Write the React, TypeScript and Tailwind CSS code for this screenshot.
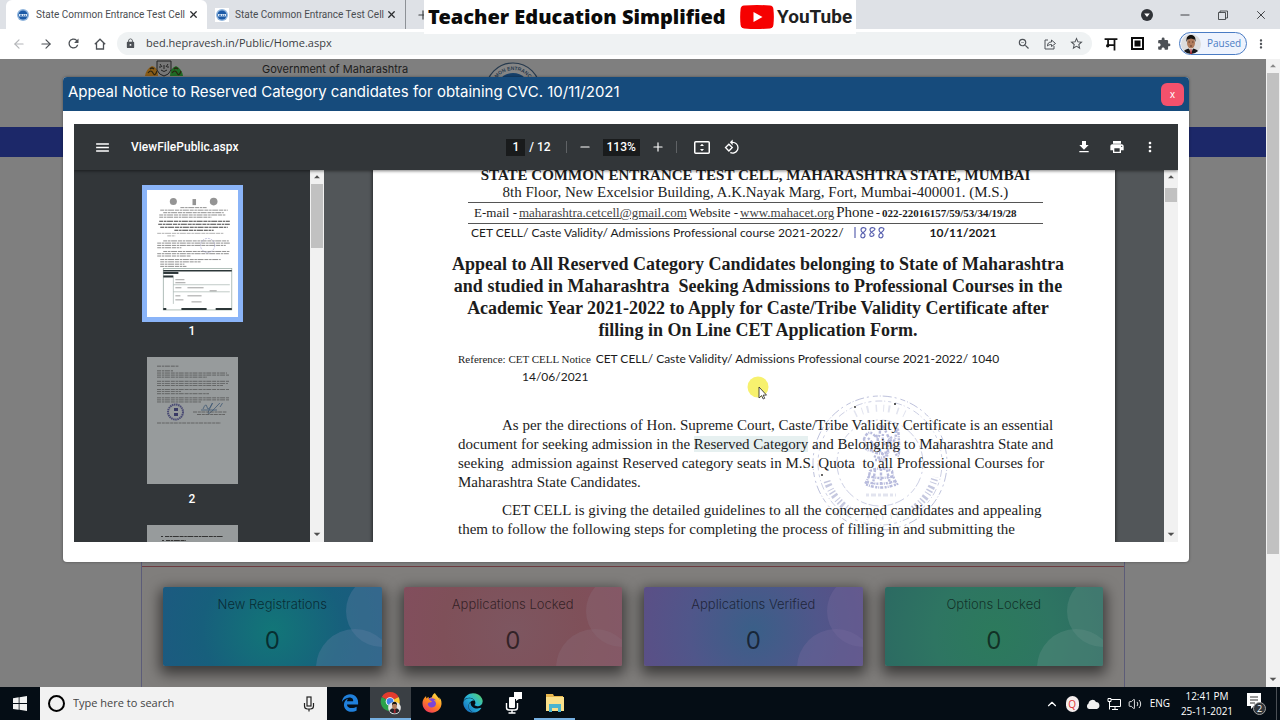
import type { ReactNode } from "react";
import {
  MdMenu,
  MdMoreVert,
  MdPrint,
  MdDownload,
  MdRotate90DegreesCcw,
  MdExtension,
  MdLock,
  MdRefresh,
  MdStarOutline,
  MdZoomOut,
  MdArrowDropUp,
  MdArrowDropDown,
} from "react-icons/md";
import { FaEdge, FaEdgeLegacy, FaFirefoxBrowser } from "react-icons/fa";
import {
  ArrowLeft,
  ArrowRight,
  ChevronUp,
  House,
  Minus,
  Plus,
  Volume2,
  X,
} from "lucide-react";

function Favicon() {
  return (
    <svg viewBox="0 0 14 14" className="size-[14px] shrink-0 bg-white" aria-hidden="true">
      <circle cx="7" cy="7" r="6" fill="#8fb4dc" />
      <circle cx="7" cy="7" r="4.6" fill="#1c5aa6" />
      <rect x="3" y="6" width="8" height="2.4" fill="#dbe8f5" />
      <path d="M4 7.2h2M7 7.2h1.2M9 7.2h1" stroke="#1c5aa6" strokeWidth="1" />
    </svg>
  );
}

function Tab({ active }: { active?: boolean }) {
  return (
    <div
      className={
        active
          ? "flex h-full w-[201px] items-center rounded-t-md bg-white pr-2 pl-[10px]"
          : "flex h-full w-[199px] items-center border-r border-[#8d9196] pr-2 pl-2"
      }
    >
      <Favicon />
      <span className="ml-1.5 font-['Roboto',sans-serif] text-[10px] whitespace-nowrap text-[#4a4d51]">
        State Common Entrance Test Cell
      </span>
      <button aria-label="Close tab" className="ml-auto text-[#2b2d30]">
        <X className="size-[11px]" strokeWidth={2.8} />
      </button>
    </div>
  );
}

function Avatar() {
  return (
    <svg viewBox="0 0 20 20" className="size-5" aria-hidden="true">
      <defs>
        <clipPath id="avatar-clip">
          <circle cx="10" cy="10" r="10" />
        </clipPath>
      </defs>
      <g clipPath="url(#avatar-clip)">
        <rect width="20" height="20" fill="#dcdcdc" />
        <path d="M2 20c0-4 4-5.500 8-5.500s8 1.500 8 5.500z" fill="#17181c" />
        <path d="M8 14l2 6 2-6z" fill="#fff" />
        <path d="M9.500 15h1l.5 5h-2z" fill="#a3222b" />
        <ellipse cx="10" cy="9" rx="4" ry="5.500" fill="#b07c5c" />
        <path d="M5.500 8C5 3 7 1 10 1s5 2 4.500 7L13.500 5.500 10 4.500 6.500 5.500z" fill="#17130f" />
        <path d="M7.500 8h1.500M11 8h1.500M9 12h2" stroke="#4a2a1c" strokeWidth=".8" />
      </g>
    </svg>
  );
}

function BrowserChrome() {
  return (
    <header className="relative shrink-0">
      <div className="flex h-[29px] items-stretch bg-[#dee1e6] pl-1.5">
        <Tab active />
        <Tab />
        <button aria-label="New tab" className="ml-2.5 text-[#3c4043]">
          <Plus className="size-3.5" />
        </button>
        <div className="ml-auto flex items-center gap-[25px] pr-3 text-[#2b2d30]">
          <svg viewBox="0 0 12 12" className="size-3" aria-hidden="true">
            <circle cx="6" cy="6" r="6" fill="#303338" />
            <path d="M3.200 4.500h5.600L6 8z" fill="#fff" />
          </svg>
          <button aria-label="Minimize">
            <Minus className="size-3.5" strokeWidth={1.500} />
          </button>
          <button aria-label="Restore">
            <svg viewBox="0 0 12 12" className="size-3" fill="none" stroke="currentColor" strokeWidth=".8">
              <path d="M1.500 3.500h7v7h-7zM3 3.500V2h7.500v7H8.500" />
            </svg>
          </button>
          <button aria-label="Close">
            <X className="size-3.5" strokeWidth={1.500} />
          </button>
        </div>
      </div>

      <div className="flex h-[30px] items-center bg-white pb-px pl-3 text-[#4d5156]">
        <div className="flex w-[105px] items-center gap-[13px]">
          <button aria-label="Back" className="text-[#b4b6b9]">
            <ArrowLeft className="size-3.5" strokeWidth={2} />
          </button>
          <button aria-label="Forward">
            <ArrowRight className="size-3.5" strokeWidth={2} />
          </button>
          <button aria-label="Reload">
            <MdRefresh className="size-[15px]" />
          </button>
          <button aria-label="Home">
            <svg viewBox="0 0 12 12" className="size-3" fill="none" stroke="currentColor" strokeWidth="1.300">
              <path d="M.8 6.200L6 1.200l5.200 5M2.500 5v6h7V5" />
            </svg>
          </button>
        </div>
        <div className="flex h-[23px] flex-1 items-center rounded-full bg-[#eff2f3] px-2">
          <MdLock className="size-[11px]" />
          <input
            aria-label="Address"
            defaultValue="bed.hepravesh.in/Public/Home.aspx"
            className="ml-2.5 min-w-0 flex-1 bg-transparent font-['Open_Sans',sans-serif] text-[11px] text-[#3c4043] outline-none"
          />
          <div className="flex items-center gap-[13px]">
            <button aria-label="Zoom">
              <MdZoomOut className="size-3.5" />
            </button>
            <button aria-label="Share">
              <svg viewBox="0 0 12 12" className="size-3" fill="none" stroke="currentColor">
                <path d="M4 2H1v9h9V8" />
                <path d="M3.500 8c0-3 1.500-4 4-4V2l4 3.500-4 3V6.500C5.500 6.500 4.500 7 3.500 8z" />
              </svg>
            </button>
            <button aria-label="Bookmark">
              <MdStarOutline className="size-[15px]" />
            </button>
          </div>
        </div>
        <div className="flex items-center gap-[13px] pr-2 pl-3">
          <svg viewBox="0 0 12 12" className="size-3.5" fill="none" stroke="#111" strokeWidth="1.500" aria-hidden="true">
            <path d="M.5 1.800h11M9 2v9.500M3.500 2v5.500M3.500 7H9" />
            <circle cx="3.200" cy="7.500" r=".7" />
          </svg>
          <svg viewBox="0 0 13 13" className="size-[13px]" aria-hidden="true">
            <rect width="13" height="13" fill="#0a0a0a" />
            <rect x="2" y="2" width="9" height="9" fill="#fff" />
            <rect x="3.500" y="3.500" width="6" height="6" fill="#0a0a0a" />
          </svg>
          <MdExtension className="size-3.5" />
        </div>
        <button className="flex h-[23px] w-[68px] items-center gap-1.5 rounded-full border border-[#4a7cc4] bg-[#eef3fd] pl-[1px] font-['Open_Sans',sans-serif] text-[10px] text-[#4a7cc4]">
          <Avatar />
          Paused
        </button>
        <button aria-label="Menu" className="mr-3 ml-[7px]">
          <MdMoreVert className="size-3.5" />
        </button>
      </div>

      <div className="absolute top-0 left-[424px] flex h-[34px] w-[432px] items-center bg-white pl-1">
        <span className="w-[312px] shrink-0 font-['Noto_Sans','Open_Sans',sans-serif] text-[20px] font-black whitespace-nowrap text-[#0b0b0b]">
          Teacher Education Simplified
        </span>
        <svg viewBox="0 0 34 24" className="h-6 w-[34px] shrink-0" aria-hidden="true">
          <path d="M4 .6Q17-.6 30 .6q3 .3 3.400 3.400.9 8 0 16-.4 3-3.400 3.400-13 1.200-26 0Q1 23 .6 20q-.9-8 0-16Q1 .9 4 .6z" fill="#f60000" />
          <path d="M13.500 7v10l9-5z" fill="#fff" />
        </svg>
        <span className="ml-[3px] font-['Roboto',sans-serif] text-[19px] font-bold text-[#212121]">
          YouTube
        </span>
      </div>
    </header>
  );
}

function PageScrollbar() {
  return (
    <div className="flex w-3.5 shrink-0 flex-col items-center justify-between bg-[#f1f1f1] text-[#555]">
      <div className="flex w-full flex-col items-center">
        <MdArrowDropUp className="size-3.5 text-[#888]" />
        <div className="h-[481px] w-3 bg-[#c1c1c1]" />
      </div>
      <MdArrowDropDown className="size-4" />
    </div>
  );
}

const counters = [
  { label: "New Registrations", value: 0, tone: "bg-[radial-gradient(circle_at_50%_55%,#127678,#175f7c_60%,#1c5a80)]", bubble: "bg-[#5a7ea0]/40" },
  { label: "Applications Locked", value: 0, tone: "bg-[radial-gradient(circle_at_50%_55%,#7d5660,#7f5059_60%,#824e5d)]", bubble: "bg-[#8a6a75]/40" },
  { label: "Applications Verified", value: 0, tone: "bg-[radial-gradient(circle_at_50%_55%,#3a5f88,#50568a_55%,#5b4f86)]", bubble: "bg-[#74689a]/40" },
  { label: "Options Locked", value: 0, tone: "bg-[radial-gradient(circle_at_50%_60%,#2c7a5c,#2e7562_50%,#2c6a62)]", bubble: "bg-[#5f8f84]/40" },
];

function StateEmblem() {
  return (
    <svg viewBox="0 0 40 30" className="h-[30px] w-10" aria-hidden="true">
      <path d="M1 17q1-7 7-10 6 1 6 10z" fill="#8a5c17" />
      <path d="M26 17q0-8 6-10 6 3 7 10z" fill="#1f6b25" />
      <path d="M4 14q3-4 5 0t4-2M28 14q3-4 5 0t4-2M6 10q2-2 4 0M30 10q2-2 4 0" stroke="#2b2410" fill="none" strokeWidth="1.200" />
      <path d="M13 2h14v9q-2 5-7 6-5-1-7-6z" fill="#777" stroke="#222" />
      <path d="M16 5l2 3M24 5l-2 3M17 11q3 3 6 0M20 6v4M15 8h2M23 8h2" stroke="#222" fill="none" />
    </svg>
  );
}

function CellLogo() {
  return (
    <svg viewBox="0 0 56 56" className="size-14" aria-hidden="true">
      <defs>
        <path id="logo-ring" d="M8 28a20 20 0 0 1 40 0" />
      </defs>
      <circle cx="28" cy="28" r="27" fill="#858585" stroke="#26394d" strokeWidth="1.200" />
      <circle cx="28" cy="28" r="17" fill="#16406b" />
      <text fontSize="5" fontWeight="bold" fill="#26394d" fontFamily="Liberation Sans, sans-serif">
        <textPath href="#logo-ring" startOffset="50%" textAnchor="middle">
          MON ENTRANC
        </textPath>
      </text>
    </svg>
  );
}

function Portal() {
  return (
    <div className="flex min-w-0 flex-1 flex-col bg-[#7f7f7f]">
      <div className="flex h-[68px] shrink-0 items-start overflow-hidden pl-36">
        <StateEmblem />
        <p className="w-[300px] pt-0.5 pl-[78px] font-['Inter',sans-serif] text-[11px] leading-4 text-[#1d1d1d]">
          Government of Maharashtra
        </p>
        <div className="pl-px pt-[3px]">
          <CellLogo />
        </div>
      </div>
      <div className="h-[30px] shrink-0 bg-[#1c2869]" />
      <main className="mr-[141px] ml-[141px] flex flex-1 flex-col border-x border-[#5c5c78] pt-[409px]">
        <div className="grid flex-1 grid-cols-4 items-start gap-[22px] border-t border-[#6e3b40] bg-[#807e7c] px-[21px] pt-5">
          {counters.map((c) => (
            <section
              key={c.label}
              className={`relative flex h-[79px] flex-col items-center overflow-hidden rounded-xs font-['Inter',sans-serif] shadow-[0_5px_14px_3px_rgba(0,0,0,0.55)] ${c.tone}`}
            >
              <div className={`absolute -top-3 -right-9 size-[72px] rounded-full ${c.bubble}`} />
              <div className={`absolute top-[42px] -right-3 size-[78px] rounded-full ${c.bubble}`} />
              <h3 className="relative mt-2 text-[13px] leading-[18px] font-light text-black/60">{c.label}</h3>
              <p className="relative mt-3 text-2xl leading-8 text-black/60">{c.value}</p>
            </section>
          ))}
        </div>
      </main>
    </div>
  );
}

function ThumbLines({ widths, className }: { widths: number[]; className: string }) {
  return (
    <svg viewBox={`0 0 74 ${widths.length * 3}`} className={className} stroke="#444" strokeWidth="1" aria-hidden="true" preserveAspectRatio="none">
      {widths.map((w, i) =>
        w > 0 ? (
          <line
            key={i}
            x1={0}
            x2={w}
            y1={i * 3 + 1.500}
            y2={i * 3 + 1.500}
            strokeDasharray="4 .8 2.500 .6 5 .9"
            opacity="0.75"
          />
        ) : null,
      )}
    </svg>
  );
}

function Thumbnails() {
  return (
    <nav aria-label="Pages" className="flex w-[236px] shrink-0 flex-col items-center overflow-hidden bg-[#323639] pt-[15px] font-['Roboto',sans-serif] text-xs font-medium text-white">
      <button aria-label="Page 1" className="h-[137px] w-[101px] shrink-0 border-[5px] border-[#8ab4f8] bg-white">
        <svg viewBox="0 0 90 126" className="h-full w-full" aria-hidden="true">
          <g fill="#666">
            <circle cx="26" cy="11.500" r="3.500" opacity="0.7" />
            <rect x="45" y="9" width="3.500" height="6" opacity="0.7" />
            <circle cx="66" cy="11.500" r="3.800" opacity="0.7" />
          </g>
          <g stroke="#777" strokeDasharray="4 .7 2.500 .6 6 .8" strokeWidth=".8">
            <path d="M33 17.500h26M13 20h67M16 22.500h60M12 24.800h66M12 27h52" />
            <path d="M12 31h70M11 34h71M13 37h67M27 40h39" stroke="#444" strokeWidth="1.100" />
            <path d="M10 43h66M20 45.500h8" opacity=".7" />
            <path d="M16 50.500h65M10 52.700h72M10 55h68M10 57.300h24M16 61h66M10 63.200h71M10 65.500h33" />
            <path d="M13 69h60M13 71.300h40M13 73.600h24M13 75.800h26" />
          </g>
          <circle cx="60" cy="55" r="7" fill="none" stroke="#aaaad0" strokeWidth=".7" strokeDasharray="2 1" />
          <rect x="16" y="78" width="68" height="41" fill="#fff" stroke="#8fa39c" strokeWidth=".7" />
          <path d="M16 80h68" stroke="#2c3638" strokeWidth="1.500" />
          <path d="M16 82.300h15" stroke="#2c3638" strokeWidth="2" />
          <path d="M16 85.800h10" stroke="#2c3638" strokeWidth="2" />
          <path d="M26 86v27M26 94h56M26 101h56" stroke="#9aa8a3" strokeWidth=".6" />
          <path d="M28 89h9M28 92h10M28 97h6M40 97h16M28 105h5M40 105h14M28 109h8M44 111h10M62 100h7" stroke="#777" strokeWidth=".7" />
          <path d="M16 118h3M34 118h25M68 118h16" stroke="#2c3638" strokeWidth="2" />
        </svg>
      </button>
      <span className="mt-px leading-4">1</span>
      <button aria-label="Page 2" className="mt-[18px] flex h-[127px] w-[91px] shrink-0 flex-col items-start bg-[#979b9c] px-2.5 pt-2">
        <ThumbLines widths={[22, 0, 16]} className="h-[7px] w-[74px]" />
        <ThumbLines widths={[70, 72, 50, 0, 72, 71, 66, 0, 72, 24, 52, 0, 72, 72, 44]} className="h-[31px] w-[74px]" />
        <svg viewBox="0 0 74 22" className="h-[22px] w-[74px]" fill="none" aria-hidden="true">
          <circle cx="18.500" cy="9" r="7.500" stroke="#4a4b74" strokeWidth="2" strokeDasharray="1.500 .6" />
          <path d="M17 5h4v3h-4zM17 10h4v3h-4z" fill="#3a3b66" />
          <path d="M46 6q3-7 4-2t5-3-2 4 7-2 3 1M44 7h16" stroke="#3f5873" strokeWidth=".8" />
          <path d="M36 9h34M40 11.500h28M0 20h64" stroke="#555" strokeWidth=".8" strokeDasharray="4 .8 3 .6" />
        </svg>
      </button>
      <span className="mt-[7px] leading-4">2</span>
      <div className="mt-[18px] h-[127px] w-[91px] shrink-0 bg-[#979b9c] pt-2.5 pl-3.5">
        <svg viewBox="0 0 70 12" className="h-3 w-[70px]" stroke="#333" aria-hidden="true">
          <path d="M0 1.500h2M4 1.500h58M1 5.500h2M5 5.500h20" strokeDasharray="4 .7 2.500 .6 6 .8" />
        </svg>
      </div>
    </nav>
  );
}

function ViewerScrollbar({ thumb }: { thumb: string }) {
  return (
    <div className="flex w-3.5 shrink-0 flex-col items-center justify-between bg-[#f1f1f1] text-[#505050]">
      <div className="flex w-full flex-col items-center">
        <MdArrowDropUp className="size-3.5" />
        <div className={`w-3 bg-[#c1c1c1] ${thumb}`} />
      </div>
      <MdArrowDropDown className="size-4" />
    </div>
  );
}

function Stamp() {
  return (
    <svg viewBox="0 0 140 140" className="absolute top-[223px] left-[437px] size-[140px]" fill="none" aria-hidden="true">
      <g stroke="#6d76b0">
        <circle cx="70" cy="70" r="67" strokeDasharray="5 2 1 2 9 3 2 4" opacity="0.45" />
        <circle cx="70" cy="70" r="62" strokeDasharray="3 4 7 2 1 3" opacity="0.35" />
        <circle cx="70" cy="70" r="43" strokeDasharray="6 3 2 4 10 2" opacity="0.35" />
        <path d="M17 88a56 56 0 0 0 24 30M103 116a56 56 0 0 0 22-32" strokeWidth="7" strokeDasharray="1.500 2 2.500 3 1 2" opacity="0.4" />
        <path d="M45 21a56 56 0 0 1 50 0" strokeWidth="7" strokeDasharray="1.500 6 1 4 2 7" opacity="0.2" />
        <path d="M52 120a54 54 0 0 0 40 0" strokeWidth="6" strokeDasharray="1 5 1.500 7" opacity="0.2" />
        <path d="M56 102h30" strokeWidth="3" strokeDasharray="3 2 5 2" opacity="0.2" />
      </g>
      <g stroke="#5058ab" strokeWidth="2.400" strokeDasharray="2 1.500 3 1 1 1" opacity="0.4">
        <path d="M54 46q4-10 10-4t6-5 7 4 9 0 3 8-5 8-6-2-8 3-8-4-6 2z" />
        <path d="M58 45q4 4 6 8M66 42q3 4 1 10M73 41q-1 6 2 11M82 44q-5 3-4 9M62 58q8 5 18 0M64 63q7 4 14-1M65 67h12" />
        <path d="M60 78q10-5 22 0 1 7 5 13-16 7-32 0 4-6 5-13z" />
        <path d="M58 83q12 4 26 0M57 89q14 4 28-1M65 77l-2 14M71 76v16M77 77l3 14" />
      </g>
      <g fill="#222">
        <circle cx="85" cy="11" r="1" />
        <circle cx="45" cy="14" r=".9" />
        <circle cx="12" cy="82" r=".9" />
      </g>
    </svg>
  );
}

function Letter() {
  const sans = "font-['Lato',sans-serif]";
  return (
    <article className="relative min-w-0 flex-1 overflow-hidden bg-white pr-[57px] pl-[85px] font-['Liberation_Serif',serif] whitespace-nowrap text-[#1c1c1c] shadow-[0_0_3px_1px_rgba(0,0,0,0.5)]">
      <Stamp />
      <div className="relative">
        <header className="-mt-1 mr-[15px] ml-2.5 text-center">
          <h1 className="text-[15px] leading-[18px] font-bold">
            STATE COMMON ENTRANCE TEST CELL, MAHARASHTRA STATE, MUMBAI
          </h1>
          <p className="text-[15px] leading-4">
            8th Floor, New Excelsior Building, A.K.Nayak Marg, Fort, Mumbai-400001. (M.S.)
          </p>
          <p className="mt-0.5 flex items-baseline justify-start gap-0.5 border-y border-[#555] pl-1.5 text-[13px] leading-[19px]">
            <span>E-mail -</span>
            <a href="mailto:maharashtra.cetcell@gmail.com" className="text-[#444] underline">maharashtra.cetcell@gmail.com</a>
            <span>Website -</span>
            <a href="#website" className="text-[#444] underline">www.mahacet.org</a>
            <span className="text-[15px]">Phone</span>
            <span>-</span>
            <span className="text-[11px] font-bold">022-22016157/59/53/34/19/28</span>
          </p>
        </header>
        <p className={`flex items-baseline pl-[13px] text-[12px] leading-[18px] ${sans}`}>
          CET CELL/ Caste Validity/ Admissions Professional course 2021-2022/
          <svg viewBox="0 0 34 14" className="ml-2 h-3.5 w-[34px] self-center" fill="none" stroke="#5b63b0" strokeWidth="1.200" aria-label="1888" role="img">
            <path d="M3 1v11" />
            <path d="M14 3c-1-2-5-2-5 1s5 3 4 6-5 2-4-1 5-3 5-6z" />
            <path d="M23 3c-1-2-5-2-5 1s5 3 4 5-5 2-4-1 5-3 5-5z" />
            <path d="M32 3c-1-2-5-2-5 1s5 3 4 6-5 2-4-1 5-3 5-6z" />
          </svg>
          <strong className="ml-11">10/11/2021</strong>
        </p>
        <h2 className="-mx-2 mt-[11px] text-center text-[18px] leading-[22px] font-bold">
          Appeal to All Reserved Category Candidates belonging to State of Maharashtra
          <br />
          and studied in Maharashtra&nbsp; Seeking Admissions to Professional Courses in the
          <br />
          Academic Year 2021-2022 to Apply for Caste/Tribe Validity Certificate after
          <br />
          filling in On Line CET Application Form.
        </h2>
        <p className={`mt-[9px] text-[12px] leading-[18px] ${sans}`}>
          <span className="pr-0.5 font-['Liberation_Serif',serif] text-[11px]">Reference: CET CELL Notice </span>
          CET CELL/ Caste Validity/ Admissions Professional course 2021-2022/ 1040
          <br />
          <span className="pl-16">14/06/2021</span>
        </p>
        <p className="mt-[30px] indent-11 text-[15px] leading-[19px]">
          As per the directions of Hon. Supreme Court, Caste/Tribe Validity Certificate is an essential
          <br />
          document for seeking admission in the <span className="bg-[#e6f0f0]">Reserved Category</span> and Belonging to Maharashtra State and
          <br />
          seeking&nbsp; admission against Reserved category seats in M.S. Quota&nbsp; to all Professional Courses for
          <br />
          Maharashtra State Candidates.
        </p>
        <p className="mt-[9px] indent-11 text-[15px] leading-[19px]">
          CET CELL is giving the detailed guidelines to all the concerned candidates and appealing
          <br />
          them to follow the following steps for completing the process of filling in and submitting the
        </p>
      </div>
    </article>
  );
}

function Divider() {
  return <span className="h-3 w-px bg-[#5f6265]" />;
}

function PdfToolbar() {
  return (
    <div className="relative z-10 flex h-[46px] shrink-0 items-center bg-[#323639] px-5 font-['Roboto',sans-serif] text-xs font-medium text-white shadow-[0_1px_3px_rgba(0,0,0,0.5)]">
      <div className="flex flex-1 items-center gap-5">
        <button aria-label="Toggle sidebar">
          <MdMenu className="size-[17px]" />
        </button>
        <span>ViewFilePublic.aspx</span>
      </div>
      <div className="flex items-center gap-[11px] pr-1.5">
        <div className="mr-1 flex items-center gap-1">
          <input aria-label="Page number" defaultValue="1" className="h-[17px] w-[19px] bg-[#191b1c] text-center outline-none" />
          <span>/ 12</span>
        </div>
        <Divider />
        <button aria-label="Zoom out">
          <Minus className="size-3.5" />
        </button>
        <input aria-label="Zoom level" defaultValue="113%" className="h-[17px] w-[37px] bg-[#191b1c] text-center outline-none" />
        <button aria-label="Zoom in">
          <Plus className="size-3.5" />
        </button>
        <Divider />
        <button aria-label="Fit to page" className="ml-1.5">
          <svg viewBox="0 0 16 13" className="h-[13px] w-4" fill="none" stroke="currentColor" strokeWidth="1.500">
            <rect x=".75" y=".75" width="14.500" height="11.500" rx="1" />
            <path d="M6 5l2-2.300L10 5zM6 8l2 2.300L10 8z" fill="currentColor" stroke="none" />
          </svg>
        </button>
        <button aria-label="Rotate" className="ml-[3px]">
          <MdRotate90DegreesCcw className="size-4" />
        </button>
      </div>
      <div className="flex flex-1 items-center justify-end gap-[17px]">
        <button aria-label="Download">
          <MdDownload className="size-4" />
        </button>
        <button aria-label="Print">
          <MdPrint className="size-4" />
        </button>
        <button aria-label="More actions">
          <MdMoreVert className="size-4" />
        </button>
      </div>
    </div>
  );
}

function NoticeDialog() {
  return (
    <div role="dialog" aria-labelledby="notice-title" className="absolute inset-x-0 top-[18px] mr-[91px] ml-[63px] flex h-[485px] flex-col overflow-hidden rounded-sm bg-white shadow-[0_0_3px_rgba(0,0,0,0.4)]">
      <div className="flex h-[34px] shrink-0 items-start justify-between bg-[#164b7c] pr-[5px] pl-[5px]">
        <h2 id="notice-title" className="font-['Inter',sans-serif] text-[15px] leading-[30px] text-white">
          Appeal Notice to Reserved Category candidates for obtaining CVC. 10/11/2021
        </h2>
        <button className="mt-1.5 size-[23px] rounded-md bg-[#f4516c] font-['Inter',sans-serif] text-[10px] text-white" aria-label="Close notice">
          x
        </button>
      </div>
      <div className="mx-[11px] mt-[13px] mb-5 flex min-h-0 flex-1 flex-col overflow-hidden bg-[#525659]">
        <PdfToolbar />
        <div className="flex min-h-0 flex-1">
          <Thumbnails />
          <ViewerScrollbar thumb="h-16" />
          <div className="flex min-w-0 flex-1 overflow-hidden px-[49px]">
            <Letter />
          </div>
          <ViewerScrollbar thumb="mt-1 h-3.5" />
        </div>
      </div>
      <svg viewBox="0 0 22 26" className="absolute top-[299px] left-[684px] h-[26px] w-[22px]" aria-hidden="true">
        <circle cx="11" cy="11" r="10.500" fill="#f5ee4a" opacity="0.8" />
        <path d="M12 11v11l2.600-2.400 1.600 3.400 1.500-.7-1.500-3.200h3.300z" fill="#fff" stroke="#222" strokeWidth=".8" />
      </svg>
    </div>
  );
}

function TaskItem({ label, active, running, children }: { label: string; active?: boolean; running?: boolean; children: ReactNode }) {
  return (
    <button
      aria-label={label}
      className={`flex w-[41px] items-center justify-center border-b-2 ${active ? "bg-[#3a3f44]" : ""} ${active || running ? "border-[#76b0e2]" : "border-transparent"}`}
    >
      {children}
    </button>
  );
}

function Taskbar() {
  return (
    <footer className="flex h-[33px] shrink-0 items-stretch bg-[#050d15] font-['Open_Sans',sans-serif] text-white">
      <button aria-label="Start" className="flex w-10 items-center justify-center">
        <svg viewBox="0 0 14 15" className="h-[15px] w-3.5" fill="#f2f2f2">
          <path d="M0 2.200l5.700-.9v5.800H0zM6.500 1.200L14 0v7.100H6.500zM0 7.900h5.700v5.800L0 12.900zM6.500 7.900H14V15l-7.500-1.200z" />
        </svg>
      </button>
      <label className="flex w-[287px] items-center bg-[#f2f2f2] pr-3 pl-2 text-[#333]">
        <span className="size-[17px] rounded-full border-2 border-black" />
        <input
          aria-label="Search"
          placeholder="Type here to search"
          className="ml-2 min-w-0 flex-1 bg-transparent text-[11px] outline-none placeholder:text-[#444]"
        />
        <svg viewBox="0 0 12 16" className="h-4 w-3" fill="none" stroke="#222" strokeWidth="1.200">
          <rect x="4" y="1" width="4" height="9" />
          <path d="M1.500 7v3q0 3 3 3h3q3 0 3-3V7M6 13v2.500" />
        </svg>
      </label>
      <div className="ml-0.5 flex">
        <TaskItem label="Edge Legacy">
          <FaEdgeLegacy className="size-[18px] text-[#2080dc]" />
        </TaskItem>
        <TaskItem label="Chrome" active>
          <svg viewBox="0 0 22 24" className="h-6 w-[22px]">
            <path d="M10 10.500L1.800 6A9.500 9.500 0 0 1 18.600 6z" fill="#e33b2e" />
            <path d="M10 10.500L1.800 6A9.500 9.500 0 0 0 10 20z" fill="#2ba24c" />
            <path d="M10 10.500L18.600 6A9.500 9.500 0 0 1 10 20z" fill="#fcc934" />
            <circle cx="10" cy="10.500" r="4.300" fill="#fff" />
            <circle cx="10" cy="10.500" r="3.400" fill="#3f82ec" />
            <circle cx="14.500" cy="17" r="6.300" fill="#e4e4e4" />
            <path d="M9.500 20q1-3 5-3t5 3q-4.500 5-10 0z" fill="#26262a" />
            <path d="M14 18h1.400l.3 4h-2z" fill="#a3222b" />
            <ellipse cx="14.500" cy="15" rx="2.400" ry="3.200" fill="#b07c5c" />
            <path d="M12 14.500q-.3-3.800 2.500-3.800t2.500 3.800l-1-1.500h-3z" fill="#17130f" />
          </svg>
        </TaskItem>
        <TaskItem label="Firefox">
          <svg width="0" height="0" className="absolute">
            <defs>
              <linearGradient id="fox" x1="0.8" y1="0" x2="0.2" y2="1">
                <stop offset="0" stopColor="#ffe14a" />
                <stop offset="0.500" stopColor="#ff8a1f" />
                <stop offset="1" stopColor="#f0325c" />
              </linearGradient>
              <linearGradient id="edge" x1="1" y1="0" x2="0" y2="1">
                <stop offset="0" stopColor="#5fd35a" />
                <stop offset="0.450" stopColor="#29b5d8" />
                <stop offset="1" stopColor="#1160b8" />
              </linearGradient>
            </defs>
          </svg>
          <span className="flex rounded-full bg-[radial-gradient(circle,#7b46d8_38%,transparent_42%)]">
            <FaFirefoxBrowser className="size-5" fill="url(#fox)" />
          </span>
        </TaskItem>
        <TaskItem label="Edge">
          <FaEdge className="size-5" fill="url(#edge)" />
        </TaskItem>
        <TaskItem label="Voice recorder">
          <svg viewBox="0 0 18 22" className="h-[22px] w-[18px]" fill="#fff">
            <rect x="4" y="5" width="6" height="11" rx="1" />
            <path d="M9 0h8v7h-3l-3 2V7H9z" />
            <path d="M1.500 11v4.500q0 2.500 2.500 2.500h6q2.500 0 2.500-2.500V11M7 18v3M3.500 21h7" fill="none" stroke="#fff" strokeWidth="1.400" />
          </svg>
        </TaskItem>
        <TaskItem label="File Explorer" running>
          <svg viewBox="0 0 20 20" className="size-5">
            <path d="M1 1h7l1 2h9v15H1z" fill="#e8b64c" />
            <path d="M1 4h18v14H1z" fill="#fbe08b" />
            <path d="M4 11h12v8h-3v-4H7v4H4z" fill="#4bb4cf" />
          </svg>
        </TaskItem>
      </div>
      <div className="ml-auto flex items-center text-[10px]">
        <div className="flex items-center gap-[7px]">
          <ChevronUp className="size-3.5" />
          <span className="flex h-4 w-[13px] items-center justify-center rounded-full bg-[#f5eded] text-[10px] leading-none text-[#d33]">Q</span>
          <svg viewBox="0 0 14 12" className="h-3 w-3.5" fill="#f0f0f0">
            <path d="M3 11a3 3 0 0 1-.5-5.500A4 4 0 0 1 10 4a3.600 3.600 0 0 1 1 7z" />
          </svg>
          <svg viewBox="0 0 14 14" className="size-3.5" fill="none" stroke="#fff">
            <path d="M4 2.500h9.500v7H3M8 9.500v3M5 12.500h6M1 1.500h3v3H1zM2.500 4.500v8" />
          </svg>
          <Volume2 className="size-3.5" strokeWidth={1.500} />
        </div>
        <span className="ml-2">ENG</span>
        <div className="ml-2.5 flex w-[54px] flex-col items-center leading-[15px]">
          <span>12:41 PM</span>
          <span>25-11-2021</span>
        </div>
        <svg viewBox="0 0 20 24" className="mr-2.5 ml-3 h-6 w-5">
          <path d="M1 1h14v13H8l-3 3v-3H1z" fill="#fff" />
          <path d="M4 5h8M4 8h8M4 11h5" stroke="#333" />
          <circle cx="13.500" cy="16.500" r="6" fill="#30353a" stroke="#a0a0a0" />
          <text x="13.500" y="20" textAnchor="middle" fontSize="9" fill="#fff" fontFamily="Open Sans, sans-serif">
            2
          </text>
        </svg>
        <span className="mr-[3px] h-full w-px bg-[#4a4f55]" />
      </div>
    </footer>
  );
}

export default function App() {
  return (
    <div className="flex h-screen flex-col overflow-hidden bg-[#7f7f7f]">
      <BrowserChrome />
      <div className="relative flex min-h-0 flex-1 overflow-hidden">
        <Portal />
        <PageScrollbar />
        <NoticeDialog />
      </div>
      <Taskbar />
    </div>
  );
}
